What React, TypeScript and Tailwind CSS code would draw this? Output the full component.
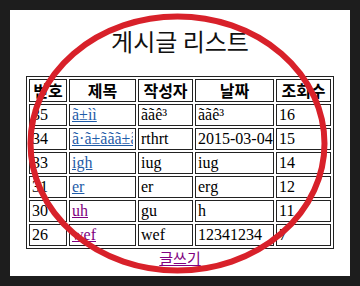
import React from "react";

interface Post {
  no: string;
  title: string;
  writer: string;
  date: string;
  hit: string;
  visited?: boolean;
}

const posts: Post[] = [
  { no: "35", title: "ã±ìì", writer: "ããê³", date: "ããê³", hit: "16" },
  { no: "34", title: "ã·ã±ããã±ã·", writer: "rthrt", date: "2015-03-04", hit: "15" },
  { no: "33", title: "igh", writer: "iug", date: "iug", hit: "14" },
  { no: "31", title: "er", writer: "er", date: "erg", hit: "12" },
  { no: "30", title: "uh", writer: "gu", date: "h", hit: "11", visited: true },
  { no: "26", title: "wef", writer: "wef", date: "12341234", hit: "7", visited: true },
];

const headers = [
  { label: "번호", w: "w-[38px]" },
  { label: "제목", w: "w-[67px]" },
  { label: "작성자", w: "w-[55px]" },
  { label: "날짜", w: "w-[79px]" },
  { label: "조회수", w: "w-[55px]" },
];

const cell = "border border-[#222] px-[2px] py-[1px] h-[22px] leading-[18px] text-left whitespace-nowrap overflow-hidden";

const App: React.FC = () => {
  return (
    <div className="relative w-[360px] h-[286px] bg-[#1d1d1d] pt-[10px] pl-[10px] font-['Liberation_Serif','Noto_Sans_CJK_KR',serif] text-[16px] text-black">
      <div className="w-[340px] h-[266px] bg-white flex flex-col items-center">
        <div className="mt-[17px] h-[28px] leading-[28px] text-[24px] font-['Noto_Sans_CJK_KR',sans-serif] text-[#111]">
          게시글 리스트
        </div>

        <table className="mt-[21px] w-[308px] table-fixed border-separate border-spacing-[2px] border border-[#222]">
          <thead>
            <tr>
              {headers.map((h) => (
                <th
                  key={h.label}
                  className={`${h.w} border border-[#222] p-0 h-[23px] leading-[19px] text-center font-bold font-['Noto_Sans_CJK_KR',sans-serif] text-[16px] whitespace-nowrap overflow-hidden`}
                >
                  {h.label}
                </th>
              ))}
            </tr>
          </thead>
          <tbody>
            {posts.map((p) => (
              <tr key={p.no}>
                <td className={cell}>{p.no}</td>
                <td className={cell}>
                  <div className="w-[61px] overflow-hidden whitespace-nowrap">
                    <a
                      href="#"
                      className={`underline ${p.visited ? "text-[#800080]" : "text-[#1f5ca8]"}`}
                    >
                      {p.title}
                    </a>
                  </div>
                </td>
                <td className={cell}>{p.writer}</td>
                <td className={cell}>{p.date}</td>
                <td className={cell}>{p.hit}</td>
              </tr>
            ))}
          </tbody>
        </table>

        <a
          href="#"
          className="leading-[18px] text-[15px] text-[#800080] underline font-['Noto_Sans_CJK_KR',sans-serif]"
        >
          글쓰기
        </a>
      </div>

      {/* red marker circle drawn over the page */}
      <svg
        className="absolute left-0 top-0 pointer-events-none"
        width="360"
        height="286"
        viewBox="0 0 360 286"
      >
        <ellipse cx="177.5" cy="143.5" rx="147" ry="127" fill="none" stroke="#d8212a" strokeWidth="6" />
      </svg>
    </div>
  );
};

export default App;
